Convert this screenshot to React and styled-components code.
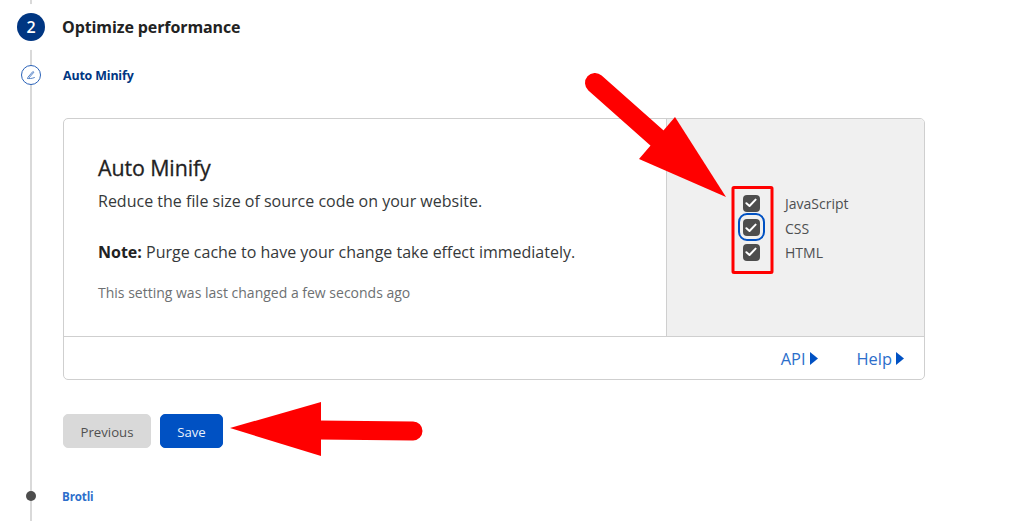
import React from 'react';
import styled, { createGlobalStyle } from 'styled-components';

const GlobalStyle = createGlobalStyle`
  html, body {
    margin: 0;
    padding: 0;
    background: #fff;
    font-family: "Open Sans", "Noto Sans", sans-serif;
    overflow: hidden;
  }
`;

const Page = styled.div`
  position: relative;
  width: 1024px;
  height: 521px;
  overflow: hidden;
  padding: 12px 0 0 17px;
  box-sizing: border-box;
`;

const Rail = styled.div`
  position: absolute;
  left: 30px;
  top: 0;
  bottom: 0;
  width: 2px;
  background: #d9d9d9;
`;

const StepRow = styled.div`
  position: relative;
  display: flex;
  align-items: center;
  height: 29px;
`;

const StepBadge = styled.div`
  width: 28px;
  height: 28px;
  border-radius: 50%;
  background: #003682;
  color: #fff;
  box-shadow: 0 0 0 9px #fff;
  display: flex;
  align-items: center;
  justify-content: center;
  font-size: 16px;
  font-weight: 600;
`;

const StepTitle = styled.h2`
  margin: 0 0 0 17px;
  font-size: 16px;
  font-weight: 700;
  letter-spacing: -0.1px;
  color: #222;
`;

const SubStep = styled.div`
  position: relative;
  display: flex;
  align-items: center;
  margin-top: ${(p) => p.$top}px;
  height: 20px;
`;

const SubMarker = styled.div`
  width: 28px;
  display: flex;
  justify-content: center;
  flex: none;
`;

const EditCircle = styled.div`
  width: 20px;
  height: 20px;
  box-sizing: border-box;
  border-radius: 50%;
  border: 1px solid #2a62b8;
  background: #fff;
  display: flex;
  align-items: center;
  justify-content: center;
`;

const Dot = styled.div`
  width: 10px;
  height: 10px;
  border-radius: 50%;
  background: #4d4d4d;
`;

const SubLabel = styled.span`
  margin-left: ${(p) => p.$left}px;
  font-size: ${(p) => p.$size}px;
  font-weight: 700;
  letter-spacing: -0.15px;
  color: ${(p) => p.$color};
`;

const Card = styled.section`
  position: relative;
  margin: 33px 0 0 46px;
  width: 862px;
  height: 262px;
  box-sizing: border-box;
  border: 1px solid #cfcfcf;
  border-radius: 5px;
  background: #fff;
  display: grid;
  grid-template-rows: 218px 1fr;
  overflow: hidden;
`;

const CardMain = styled.div`
  display: grid;
  grid-template-columns: 602px 1fr;
  border-bottom: 1px solid #cfcfcf;
`;

const CardText = styled.div`
  padding: 35px 0 0 34px;
  color: #36393a;
`;

const CardTitle = styled.h3`
  margin: 0;
  font-size: 21.4px;
  line-height: 28px;
  font-weight: 500;
  letter-spacing: -0.1px;
  color: #222;
  -webkit-text-stroke: 0.3px #222;
`;

const Body = styled.p`
  margin: ${(p) => p.$top}px 0 0;
  font-size: 16px;
  line-height: 22px;
  color: #36393a;

  strong {
    font-weight: 700;
    color: #222;
  }
`;

const Changed = styled.p`
  margin: 20px 0 0;
  font-size: 14px;
  line-height: 20px;
  color: #6d7072;
`;

const SidePanel = styled.div`
  background: #f0f0f0;
  border-left: 1px solid #cfcfcf;
  padding: 76px 0 0 75px;
  display: flex;
  flex-direction: column;
  gap: 8.5px;
`;

const OptionRow = styled.div`
  display: flex;
  align-items: center;
  height: 16px;
`;

const CheckHolder = styled.div`
  width: 18px;
  height: 16px;
  flex: none;
  display: flex;
  align-items: center;
  justify-content: center;
  position: relative;

  ${(p) =>
    p.$focus &&
    `
    &::after {
      content: '';
      position: absolute;
      left: -4.5px;
      top: -7px;
      width: 23px;
      height: 24px;
      border: 2px solid #0051c3;
      border-radius: 9px;
    }
  `}
`;

const CheckBox = styled.div`
  width: 17px;
  height: 17px;
  border-radius: 4px;
  background: #4d4d4d;
  display: flex;
  align-items: center;
  justify-content: center;
  flex: none;
`;

const OptionLabel = styled.span`
  margin-left: 25px;
  font-size: 14px;
  position: relative;
  top: 0.5px;
  color: #4d4f50;
`;

const CardFooter = styled.div`
  display: flex;
  justify-content: flex-end;
  align-items: center;
  gap: 39px;
  padding: 1px 20px 0 0;
`;

const FooterLink = styled.a`
  display: flex;
  align-items: center;
  gap: 4px;
  font-size: 16.4px;
  color: #2c6ecb;
  text-decoration: none;
`;

const Actions = styled.div`
  display: flex;
  gap: 9px;
  margin: 34px 0 0 46px;
`;

const Button = styled.button`
  height: 34px;
  width: ${(p) => p.$width}px;
  border: 1px solid ${(p) => (p.$primary ? '#0051c3' : '#d9d9d9')};
  border-radius: 5px;
  background: ${(p) => (p.$primary ? '#0051c3' : '#d9d9d9')};
  color: ${(p) => (p.$primary ? '#e8f0fb' : '#505050')};
  font-family: inherit;
  font-size: 13.2px;
  padding: 1px 0 0;
`;

const Overlay = styled.svg`
  position: absolute;
  left: 0;
  top: 0;
  pointer-events: none;
`;

const Check = () => (
  <svg width="12" height="10" viewBox="0 0 12 10">
    <path d="M1.4 5.2 L4.5 8 L10.6 1.6" fill="none" stroke="#fff" strokeWidth="2" strokeLinecap="round" strokeLinejoin="round" />
  </svg>
);

const Caret = () => (
  <svg width="8" height="13" viewBox="0 0 8 13">
    <path d="M0 0 L8 6.5 L0 13 Z" fill="#0051c3" />
  </svg>
);

const options = [
  { label: 'JavaScript' },
  { label: 'CSS', focus: true },
  { label: 'HTML' },
];

const App = () => (
  <Page>
    <GlobalStyle />
    <Rail />
    <StepRow>
      <StepBadge>2</StepBadge>
      <StepTitle>Optimize performance</StepTitle>
    </StepRow>
    <SubStep $top={24}>
      <SubMarker>
        <EditCircle>
          <svg width="10" height="10" viewBox="0 0 10 10">
            <path d="M1.5 8.5 C3 8.8 6 8.6 8.4 7.6 M1.8 7.4 L6.6 1.8 C7.2 1.2 8 2 7.5 2.7 L3 7.8" fill="none" stroke="#2a62b8" strokeWidth="0.8" strokeLinecap="round" />
          </svg>
        </EditCircle>
      </SubMarker>
      <SubLabel $left={18} $size={12.4} $color="#003682">Auto Minify</SubLabel>
    </SubStep>
    <Card>
      <CardMain>
        <CardText>
          <CardTitle>Auto Minify</CardTitle>
          <Body $top={8}>Reduce the file size of source code on your website.</Body>
          <Body $top={29}><strong>Note:</strong> Purge cache to have your change take effect immediately.</Body>
          <Changed>This setting was last changed a few seconds ago</Changed>
        </CardText>
        <SidePanel>
          {options.map((o) => (
            <OptionRow key={o.label}>
              <CheckHolder $focus={o.focus}>
                <CheckBox><Check /></CheckBox>
              </CheckHolder>
              <OptionLabel>{o.label}</OptionLabel>
            </OptionRow>
          ))}
        </SidePanel>
      </CardMain>
      <CardFooter>
        <FooterLink href="#">API<Caret /></FooterLink>
        <FooterLink href="#">Help<Caret /></FooterLink>
      </CardFooter>
    </Card>
    <Actions>
      <Button $width={88}>Previous</Button>
      <Button $primary $width={63}>Save</Button>
    </Actions>
    <SubStep $top={38}>
      <SubMarker><Dot /></SubMarker>
      <SubLabel $left={17} $size={11.6} $color="#2c6ecb">Brotli</SubLabel>
    </SubStep>

    {/* annotations drawn over the screenshot */}
    <Overlay width="1024" height="521" viewBox="0 0 1024 521">
      <path d="M595 83 L657 138" stroke="#f00" strokeWidth="20" strokeLinecap="round" fill="none" />
      <path d="M726 197 L675 117 L639 159 Z" fill="#f00" />
      <path d="M230 428 L321 402 L321 456 Z" fill="#f00" />
      <path d="M318 430 L413 431" stroke="#f00" strokeWidth="19" strokeLinecap="round" fill="none" />
      <rect x="733" y="187.5" width="39" height="85" rx="1" fill="none" stroke="#f00" strokeWidth="3" />
    </Overlay>
  </Page>
);

export default App;
